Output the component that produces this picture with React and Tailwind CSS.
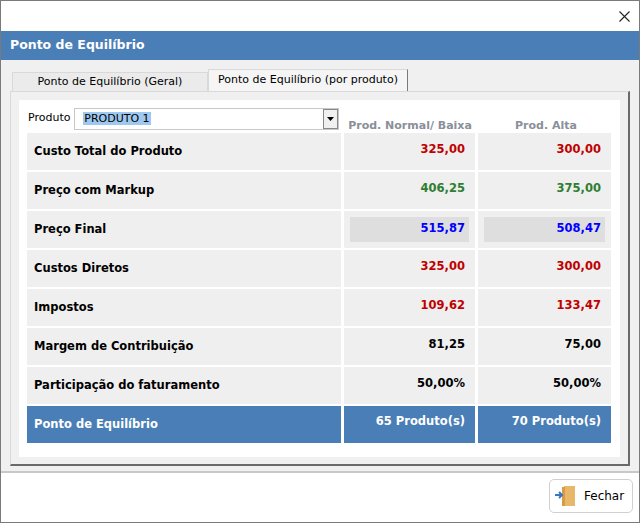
export default function App() {
  const rows = [
    ["Custo Total do Produto", "325,00", "300,00", "text-[#c00000]"],
    ["Preço com Markup", "406,25", "375,00", "text-[#2e7d32]"],
    ["Preço Final", "515,87", "508,47", "text-[#0000ff]", true],
    ["Custos Diretos", "325,00", "300,00", "text-[#c00000]"],
    ["Impostos", "109,62", "133,47", "text-[#c00000]"],
    ["Margem de Contribuição", "81,25", "75,00", "text-black"],
    ["Participação do faturamento", "50,00%", "50,00%", "text-black"],
  ];
  return (
    <div className="w-[640px] h-[523px] bg-white border border-[#7a7a7a] flex flex-col text-[11.5px]" style={{ fontFamily: "Tahoma, 'DejaVu Sans', sans-serif" }}>
      <div className="h-[30px] flex justify-end items-center pr-[9px]">
        <svg width="11" height="11" viewBox="0 0 11 11"><path d="M0.5 0.5L10.5 10.5M10.5 0.5L0.5 10.5" stroke="#222" strokeWidth="1.1" /></svg>
      </div>
      <div className="h-[29px] bg-[#4a7eb6] text-white font-bold text-[12.5px] flex items-center pl-[9px]">Ponto de Equilíbrio</div>
      <div className="flex-1 bg-[#f0f0f0] px-[9px] pt-[9px] flex flex-col">
        <div className="flex items-end h-[22px] text-[11px] pl-[2px]">
          <div className="w-[196px] h-[19px] border border-[#d9d9d9] border-b-0 bg-[#ebebeb] flex items-center justify-center">Ponto de Equilíbrio (Geral)</div>
          <div className="w-[200px] h-[22px] border border-[#d9d9d9] border-r-[#7a7a7a] border-b-0 bg-[#f5f5f5] flex items-center justify-center">Ponto de Equilíbrio (por produto)</div>
        </div>
        <div className="h-[375px] w-[620px] border border-[#d9d9d9] border-r-[#6a6a6a] border-b-[#6a6a6a] border-r-2 border-b-2 bg-[#f0f0f0] p-[8px] pr-[8px]">
          <div className="bg-white h-[357px] pl-[8px] pt-[6px] pr-[6px]">
            <div className="flex items-center h-[25px] gap-[3px]">
              <span className="w-[45px] pl-[1px] text-[11px]">Produto</span>
              <div className="w-[269px] h-[22px] border border-[#c8c8c8] flex items-center pl-[8px] justify-between">
                <span className="bg-[#9ec8ef] leading-[13px] px-[1px] text-[11px]">PRODUTO 1</span>
                <span className="w-[15px] h-[20px] bg-[#f0f0f0] border border-[#888] flex items-center justify-center">
                  <svg width="7" height="4" viewBox="0 0 7 4"><path d="M0 0H7L3.5 4Z" fill="#000" /></svg>
                </span>
              </div>
              <div className="flex-1 flex font-bold text-[#8a8f99] pt-[16px] text-[11px] whitespace-nowrap">
                <span className="w-[136px] text-center">Prod. Normal/ Baixa</span>
                <span className="w-[136px] text-center">Prod. Alta</span>
              </div>
            </div>
            <div className="flex flex-col gap-[2px] mt-[2px]">
              {rows.map(([l, a, b, c, box]) => (
                <div key={l} className="flex gap-[3px] h-[37px] font-bold">
                  <div className="w-[314px] bg-[#efefef] flex items-center pl-[7px]">{l}</div>
                  <div className={`w-[131px] bg-[#efefef] ${box ? "px-[6px] py-[6px]" : ""}`}>
                    <div className={`h-full flex ${box ? "bg-[#dedede] items-start pt-[3px] pr-[4px]" : "items-center pr-[10px] pb-[3px]"} justify-end ${c}`}>{a}</div>
                  </div>
                  <div className={`w-[133px] bg-[#efefef] ${box ? "px-[6px] py-[6px]" : ""}`}>
                    <div className={`h-full flex ${box ? "bg-[#dedede] items-start pt-[3px] pr-[4px]" : "items-center pr-[10px] pb-[3px]"} justify-end ${c}`}>{b}</div>
                  </div>
                </div>
              ))}
              <div className="flex gap-[3px] h-[37px] font-bold text-white">
                <div className="w-[314px] bg-[#4a7eb6] flex items-center pl-[7px]">Ponto de Equilíbrio</div>
                <div className="w-[131px] bg-[#4a7eb6] flex items-start pt-[7px] justify-end pr-[10px]">65 Produto(s)</div>
                <div className="w-[133px] bg-[#4a7eb6] flex items-start pt-[7px] justify-end pr-[10px]">70 Produto(s)</div>
              </div>
            </div>
          </div>
        </div>
      </div>
      <div className="h-[51px] border-t-2 border-[#c8c8c8] flex justify-end items-start pt-[6px] pr-[6px]">
        <div className="w-[84px] h-[34px] border border-[#d0d0d0] rounded-[5px] flex items-center gap-[6px] pl-[4px]">
          <svg width="24" height="24" viewBox="0 0 24 24">
            <rect x="10" y="2" width="11" height="20" fill="#e8b86a" />
            <rect x="8" y="3" width="3" height="19" fill="#d89b45" />
            <path d="M1 11H8M5 8L8 11L5 14" stroke="#3a76c0" strokeWidth="2" fill="none" />
          </svg>
          <span className="text-[12px]">Fechar</span>
        </div>
      </div>
    </div>
  );
}
